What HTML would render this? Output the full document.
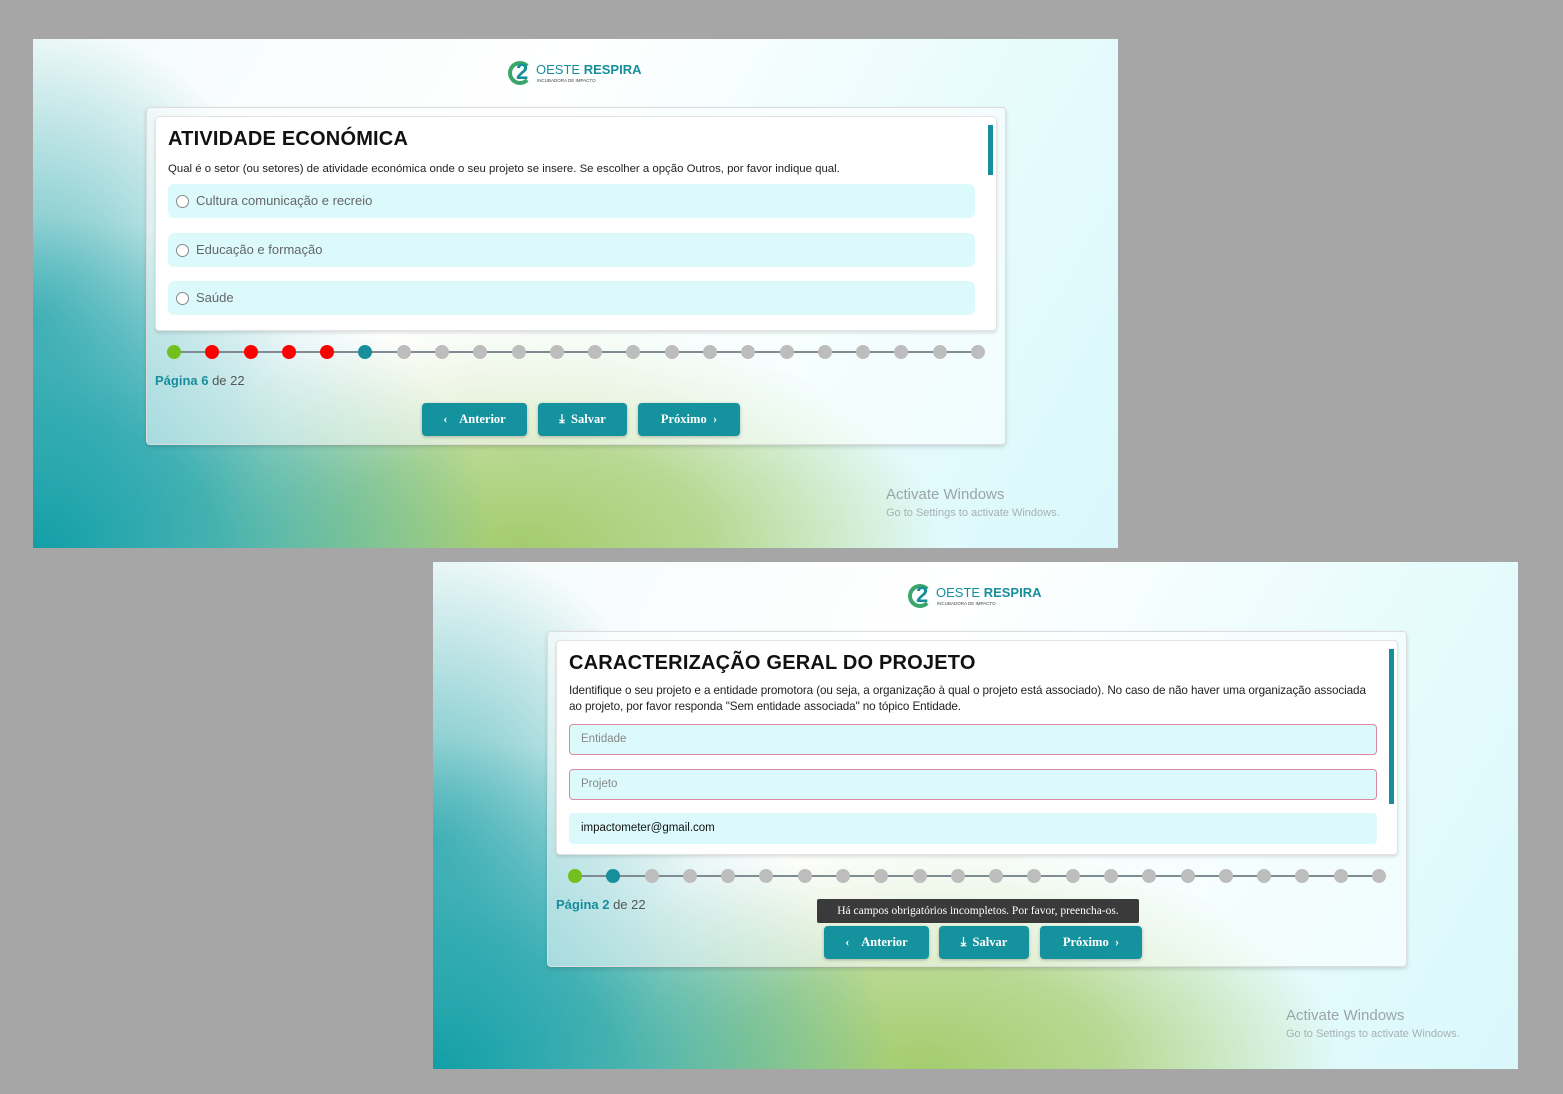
<!DOCTYPE html>
<html><head><meta charset="utf-8"><style>
*{margin:0;padding:0;box-sizing:border-box}
body{width:1563px;height:1094px;background:#a6a6a6;position:relative;overflow:hidden;font-family:"Liberation Sans",sans-serif}
.shot{position:absolute;width:1085px;height:508px;overflow:hidden;
background:
radial-gradient(ellipse 460px 330px at 0% 100%,#129ea6 0%,rgba(18,158,166,.75) 40%,rgba(18,158,166,0) 100%),
radial-gradient(ellipse 420px 230px at 45% 100%,#a4cc6e 0%,rgba(164,204,110,.75) 45%,rgba(164,204,110,0) 100%),
radial-gradient(ellipse 260px 300px at 0% 55%,rgba(40,165,170,.75),rgba(40,165,170,0)),
linear-gradient(120deg,#f4fbfb 0%,#ffffff 40%,#e6fbfc 75%,#d9f8fb 100%)}
.logo{position:absolute;left:475px;top:21px;width:140px;height:26px}
.logo .c{position:absolute;left:0;top:1px;width:24px;height:24px;border-radius:50%;border:4px solid #3aa66a;border-right-color:transparent;}
.logo .two{position:absolute;left:8px;top:-1px;font:bold 22px "Liberation Sans",sans-serif;color:#168f9b}
.logo .t{position:absolute;left:28px;top:2px;font-size:13px;color:#168f9b;white-space:nowrap}
.logo .t b{font-weight:bold}
.logo .s{position:absolute;left:29px;top:18px;font-size:4.5px;color:#444;white-space:nowrap}
.card{position:absolute;left:113px;top:68px;width:860px;height:338px;border:1px solid #ddd;border-radius:4px;background:rgba(255,255,255,.55);box-shadow:0 2px 4px rgba(0,0,0,.15)}
.inner{position:absolute;left:8px;top:8px;width:842px;height:215px;background:#fff;border:1px solid #e3e3e3;border-radius:4px;box-shadow:0 2px 3px rgba(0,0,0,.12);overflow:hidden}
.title{position:absolute;left:12px;top:11px;font-weight:bold;font-size:20px;color:#111;letter-spacing:.2px}
.desc{position:absolute;left:12px;font-size:11.4px;color:#222;line-height:16px;width:820px;white-space:nowrap}
.opt{position:absolute;left:12px;width:807px;height:34px;background:#dcfafc;border-radius:6px;font-size:13px;color:#666;line-height:34px;padding-left:28px}
.opt:before{content:"";position:absolute;left:8px;top:11px;width:11px;height:11px;border:1px solid #888;border-radius:50%;background:#fff}
.inp{position:absolute;left:12px;width:808px;height:31px;background:#dcfafc;border:1px solid #d88aa4;border-radius:4px;font-size:11.5px;color:#888;line-height:29px;padding-left:11px}
.sb{position:absolute;right:3px;top:4px;width:5px;height:206px}
.sb i{position:absolute;left:0;top:4px;width:5px;background:#168f9b}
.dots{position:absolute;left:20px;top:237px;width:818px;height:14px;display:flex;justify-content:space-between}
.dots:before{content:"";position:absolute;left:7px;right:7px;top:6px;height:2px;background:#7f8c92}
.dots span{position:relative;width:14px;height:14px;border-radius:50%;background:#bdbdbd}
.dots .g{background:#73c01c}.dots .r{background:#f00}.dots .b{background:#178e9b}
.pg{position:absolute;left:8px;top:265px;font-size:13px;color:#555}
.pg b{color:#178e9b}
.btn{position:absolute;top:295px;height:33px;background:#14939e;border-radius:4px;color:#fff;font:bold 12.5px "Liberation Serif",serif;line-height:33px;text-align:center;box-shadow:0 1px 3px rgba(0,0,0,.25)}
.aw{position:absolute;left:853px;top:447px;color:#9aa5a8;font-size:15px}
.aw2{position:absolute;left:853px;top:468px;color:#a8b0b2;font-size:11px}
.tip{position:absolute;left:383px;top:336px;width:322px;height:24px;background:#3a3a3a;color:#fff;font:11.5px "Liberation Serif",serif;line-height:24px;text-align:center;border-radius:2px}
</style></head><body>

<div class="shot" style="left:33px;top:39px;height:509px">
 <div class="logo"><div class="c"></div><div class="two">2</div><div class="t">OESTE <b>RESPIRA</b></div><div class="s">INCUBADORA DE IMPACTO</div></div>
 <div class="card">
  <div class="inner">
   <div class="title">ATIVIDADE ECONÓMICA</div>
   <div class="desc" style="top:44px">Qual é o setor (ou setores) de atividade económica onde o seu projeto se insere. Se escolher a opção Outros, por favor indique qual.</div>
   <div class="opt" style="top:67px">Cultura comunicação e recreio</div>
   <div class="opt" style="top:116px">Educação e formação</div>
   <div class="opt" style="top:164px">Saúde</div>
   <div class="sb"><i style="height:50px"></i></div>
  </div>
  <div class="dots"><span class="g"></span><span class="r"></span><span class="r"></span><span class="r"></span><span class="r"></span><span class="b"></span><span></span><span></span><span></span><span></span><span></span><span></span><span></span><span></span><span></span><span></span><span></span><span></span><span></span><span></span><span></span><span></span></div>
  <div class="pg"><b>Página 6</b> de 22</div>
  <div class="btn" style="left:275px;width:105px">‹&nbsp;&nbsp;&nbsp; Anterior</div>
  <div class="btn" style="left:391px;width:89px">⤓&nbsp; Salvar</div>
  <div class="btn" style="left:491px;width:102px">Próximo &nbsp;›</div>
 </div>
 <div class="aw">Activate Windows</div>
 <div class="aw2">Go to Settings to activate Windows.</div>
</div>

<div class="shot" style="left:433px;top:562px;height:507px">
 <div class="logo"><div class="c"></div><div class="two">2</div><div class="t">OESTE <b>RESPIRA</b></div><div class="s">INCUBADORA DE IMPACTO</div></div>
 <div class="card" style="left:114px;top:69px;height:336px">
  <div class="inner">
   <div class="title">CARACTERIZAÇÃO GERAL DO PROJETO</div>
   <div class="desc" style="top:42px;font-size:11.7px;letter-spacing:-.1px">Identifique o seu projeto e a entidade promotora (ou seja, a organização à qual o projeto está associado). No caso de não haver uma organização associada<br>ao projeto, por favor responda "Sem entidade associada" no tópico Entidade.</div>
   <div class="inp" style="top:83px">Entidade</div>
   <div class="inp" style="top:128px">Projeto</div>
   <div class="inp" style="top:172px;border-color:#dcfafc;color:#111">impactometer@gmail.com</div>
   <div class="sb"><i style="height:155px"></i></div>
  </div>
  <div class="dots"><span class="g"></span><span class="b"></span><span></span><span></span><span></span><span></span><span></span><span></span><span></span><span></span><span></span><span></span><span></span><span></span><span></span><span></span><span></span><span></span><span></span><span></span><span></span><span></span></div>
  <div class="pg"><b>Página 2</b> de 22</div>
  <div class="tip" style="left:269px;top:267px">Há campos obrigatórios incompletos. Por favor, preencha-os.</div>
  <div class="btn" style="left:276px;top:294px;width:105px">‹&nbsp;&nbsp;&nbsp; Anterior</div>
  <div class="btn" style="left:391px;top:294px;width:90px">⤓&nbsp; Salvar</div>
  <div class="btn" style="left:492px;top:294px;width:102px">Próximo &nbsp;›</div>
 </div>
 <div class="aw" style="top:445px">Activate Windows</div>
 <div class="aw2" style="top:466px">Go to Settings to activate Windows.</div>
</div>
</body></html>
